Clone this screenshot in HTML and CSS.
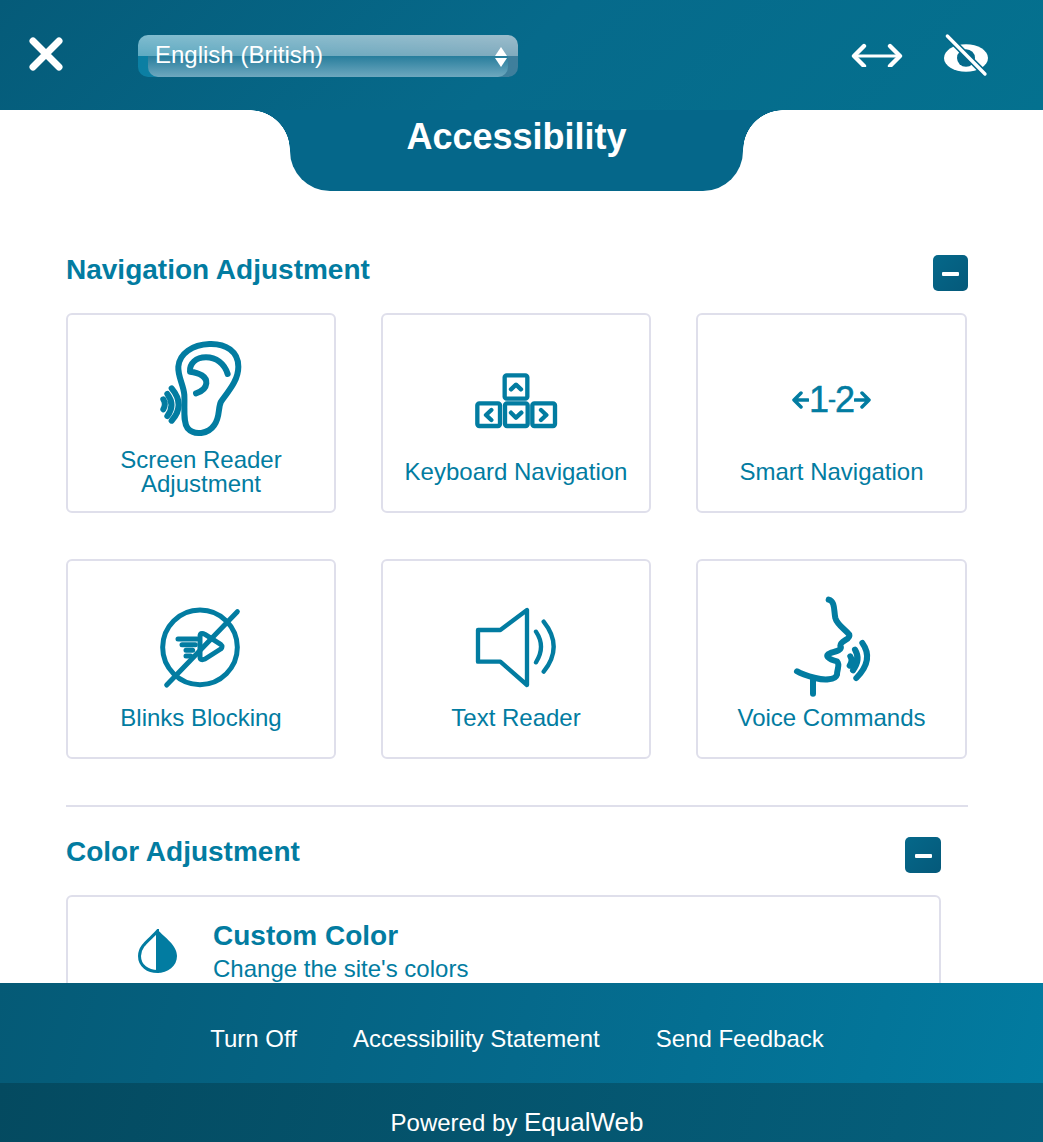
FILE: index.html
```html
<!DOCTYPE html>
<html lang="en">
<head>
    <meta charset="UTF-8">
    <meta name="viewport" content="width=device-width, initial-scale=1.0">
    <title>Accessibility</title>
    <link rel="stylesheet" href="styles.css">
</head>
<body>
    <div class="panel">
        <header class="top-bar">
            <button class="close-btn" type="button" aria-label="Close">
                <svg width="34" height="34" viewBox="0 0 34 34"><path d="M4 4 30 30M30 4 4 30" fill="none" stroke="#fff" stroke-width="7" stroke-linecap="round"/></svg>
            </button>
            <div class="lang-box">
                <span class="lang-glass"></span>
                <select class="lang-select" aria-label="Language">
                    <option>English (British)</option>
                </select>
                <span class="lang-arrows"></span>
            </div>
            <div class="top-icons">
                <svg width="54" height="24" viewBox="0 0 162 72" fill="none" stroke="#fff" stroke-linecap="round" stroke-linejoin="round">
                    <path d="M14 39H148" stroke-width="9"/>
                    <path d="M42 9 12 39 42 69M120 9 150 39 120 69" stroke-width="13"/>
                </svg>
                <svg width="46" height="46" viewBox="0 0 138 138">
                    <ellipse cx="69" cy="78" rx="66" ry="41" fill="#fff"/>
                    <ellipse cx="69" cy="78" rx="27" ry="26" fill="#056a8b"/>
                    <path d="M13 12 126 126" stroke="#056a8b" stroke-width="20"/>
                    <path d="M13 12 126 126" stroke="#fff" stroke-width="10" stroke-linecap="round"/>
                </svg>
            </div>
        </header>

        <main class="content">
            <div class="title-row">
                <h1 class="title-tab">Accessibility</h1>
            </div>

            <section class="section section-nav">
                <div class="section-head">
                    <h2>Navigation Adjustment</h2>
                    <button class="minus-btn" type="button" aria-label="Collapse"></button>
                </div>
                <div class="card-grid">
                    <div class="tile">
                        <div class="tile-icon">
                            <svg width="140" height="120" viewBox="0 -6 420 360" class="icon-line icon-bold">
                                <path d="M235 42C285 40 322 65 322 110 322 150 295 180 270 215 260 235 268 260 250 285 232 312 190 318 170 295 155 275 162 240 160 195 158 165 140 140 142 110 145 70 185 44 235 42Z"/>
                                <path d="M290 132C280 100 255 82 225 82 195 82 175 100 177 125 205 128 228 140 226 160 224 178 208 186 195 190"/>
                                <path d="M97 208Q106 222 97 238M109 192Q134 225 109 258M122 175Q164 225 122 272"/>
                            </svg>
                        </div>
                        <div class="tile-label">Screen Reader Adjustment</div>
                    </div>
                    <div class="tile">
                        <div class="tile-icon">
                            <svg width="110" height="80" viewBox="3 0 330 240" class="icon-line icon-keys">
                                <rect x="134" y="46" width="68" height="70" rx="6"/>
                                <rect x="52" y="130" width="68" height="68" rx="6"/>
                                <rect x="135" y="130" width="68" height="68" rx="6"/>
                                <rect x="217" y="130" width="68" height="68" rx="6"/>
                                <path d="M153 88 168 74 183 88M94 150 78 165 94 180M153 158 168 173 184 158M243 150 259 165 243 180"/>
                            </svg>
                        </div>
                        <div class="tile-label">Keyboard Navigation</div>
                    </div>
                    <div class="tile">
                        <div class="tile-icon">
                            <div class="smart-icon">
                                <svg width="17" height="20" viewBox="0 0 17 20" class="icon-line icon-arrow"><path d="M16 10H3M9 3 2 10 9 17"/></svg>
                                <span>1<span class="smart-dash">-</span>2</span>
                                <svg width="17" height="20" viewBox="0 0 17 20" class="icon-line icon-arrow"><path d="M1 10H14M8 3 15 10 8 17"/></svg>
                            </div>
                        </div>
                        <div class="tile-label">Smart Navigation</div>
                    </div>
                    <div class="tile">
                        <div class="tile-icon">
                            <svg width="100" height="100" viewBox="3 3 300 300" class="icon-line">
                                <circle cx="150" cy="157" r="112"/>
                                <path d="M50 270 262 50"/>
                                <path d="M150 125Q150 110 165 118L212 148Q220 155 212 162L165 192Q150 198 150 185Z"/>
                                <path d="M84 132H140M96 149H136M108 166H128M108 183H122"/>
                            </svg>
                        </div>
                        <div class="tile-label">Blinks Blocking</div>
                    </div>
                    <div class="tile">
                        <div class="tile-icon">
                            <svg width="100" height="90" viewBox="2 3 300 270" class="icon-line icon-thin">
                                <path d="M38 90H105L185 30V255L105 185H38Z"/>
                                <path d="M212 95Q242 140 212 187M235 65Q295 140 235 215"/>
                            </svg>
                        </div>
                        <div class="tile-label">Text Reader</div>
                    </div>
                    <div class="tile">
                        <div class="tile-icon">
                            <svg width="100" height="110" viewBox="5 4 300 330" class="icon-line icon-bold">
                                <path d="M145 30C165 35 160 62 165 85 170 105 195 120 207 135 212 150 180 152 180 168 186 180 172 184 150 190 130 196 145 210 170 215 180 225 170 238 170 255 165 272 130 272 105 265 85 260 65 255 50 245"/>
                                <path d="M98 270V312"/>
                                <path d="M210 200Q218 212 208 228M224 180Q242 210 218 242M246 160Q282 210 228 265"/>
                            </svg>
                        </div>
                        <div class="tile-label">Voice Commands</div>
                    </div>
                </div>
            </section>

            <section class="section section-color">
                <div class="section-head">
                    <h2>Color Adjustment</h2>
                    <button class="minus-btn" type="button" aria-label="Collapse"></button>
                </div>
                <div class="wide-card">
                    <svg width="40" height="44" viewBox="0 0 40 44" class="drop-icon">
                        <path d="M19.5 2C13 10 1.5 16 1.5 27 1.5 37 10 42.5 19.5 42.5Z" fill="none" stroke="#027ca1" stroke-width="3"/>
                        <path d="M19 0C27 9 39 16 39 27 39 37 30 44 19 44Z" fill="#027ca1"/>
                    </svg>
                    <div class="wide-text">
                        <div class="wide-title">Custom Color</div>
                        <div class="wide-sub">Change the site's colors</div>
                    </div>
                </div>
            </section>
        </main>

        <footer>
            <nav class="foot-links">
                <a>Turn Off</a>
                <a>Accessibility Statement</a>
                <a>Send Feedback</a>
            </nav>
            <div class="powered">Powered by <span class="brand">EqualWeb</span></div>
        </footer>
    </div>
</body>
</html>
```
FILE: styles.css
```css
/* Page */
html, body {
    margin: 0;
    padding: 0;
    height: 100%;
    background-color: white;
}

body {
    font-family: "Liberation Sans", Arial, sans-serif;
    color: #027ca1;
    overflow: hidden;
}

.panel {
    display: flex;
    flex-direction: column;
    height: 1142px;
}

/* Top bar */
.top-bar {
    display: flex;
    align-items: center;
    flex-shrink: 0;
    height: 110px;
    padding: 0 54px 0 29px;
    box-sizing: border-box;
    background: linear-gradient(135deg, #055b79 0%, #066a8b 50%, #04718f 100%);
}

.close-btn {
    display: flex;
    width: 34px;
    height: 34px;
    margin-top: -3px;
    padding: 0;
    background: none;
    border: none;
}

.lang-box {
    position: relative;
    width: 380px;
    height: 42px;
    margin: 2px 0 0 75px;
    border-radius: 10px;
    overflow: hidden;
    background:
        linear-gradient(to bottom, rgba(255, 255, 255, 0.48) 0, rgba(255, 255, 255, 0.34) 50%, transparent 50%),
        linear-gradient(to right, #0b7fa3, #3f7f9c);
}

.lang-glass {
    position: absolute;
    left: 10px;
    right: 10px;
    top: 21px;
    bottom: 0;
    border-radius: 0 0 10px 10px;
    background: linear-gradient(to bottom, #277d9c, #6ea8bf);
}

.lang-select {
    position: relative;
    width: 100%;
    height: 100%;
    padding: 0 0 4px 17px;
    font-family: inherit;
    font-size: 24px;
    color: white;
    background: transparent;
    border: none;
    appearance: none;
}

.lang-arrows {
    position: absolute;
    right: 11px;
    top: 12px;
    width: 0;
    height: 20px;
    border-left: 6px solid transparent;
    border-right: 6px solid transparent;
}

.lang-arrows::before,
.lang-arrows::after {
    content: "";
    position: absolute;
    left: -6px;
    border-left: 6px solid transparent;
    border-right: 6px solid transparent;
}

.lang-arrows::before {
    top: 0;
    border-bottom: 9px solid white;
}

.lang-arrows::after {
    bottom: 0;
    border-top: 9px solid white;
}

.top-icons {
    display: flex;
    align-items: center;
    gap: 39px;
    margin-left: auto;
}

/* Scrolling content */
.content {
    flex: 1;
    min-height: 0;
    overflow: hidden;
    padding-left: 66px;
}

.title-row {
    display: flex;
    justify-content: center;
    width: 901px;
}

.title-tab {
    position: relative;
    width: 453px;
    height: 81px;
    margin: 0;
    padding-bottom: 27px;
    box-sizing: border-box;
    display: flex;
    align-items: center;
    justify-content: center;
    font-size: 36px;
    font-weight: bold;
    color: white;
    border-radius: 0 0 40px 40px;
    background-color: #05678a;
}

.title-tab::before,
.title-tab::after {
    content: "";
    position: absolute;
    top: 0;
    width: 40px;
    height: 40px;
}

.title-tab::before {
    left: -40px;
    background: radial-gradient(circle at 0 100%, transparent 39.5px, #05678a 40px);
}

.title-tab::after {
    right: -40px;
    background: radial-gradient(circle at 100% 100%, transparent 39.5px, #05678a 40px);
}

/* Sections */
.section-nav {
    width: 902px;
    margin-top: 64px;
    padding-bottom: 46px;
    border-bottom: 2px solid #dfdfeb;
}

.section-nav .minus-btn {
    width: 35px;
}

.section-color {
    width: 875px;
    margin-top: 30px;
}

.section-head {
    display: flex;
    justify-content: space-between;
    align-items: flex-start;
    margin-bottom: 22px;
}

.section-head h2 {
    margin: 0;
    font-size: 28px;
    line-height: 30px;
    font-weight: bold;
}

.minus-btn {
    display: flex;
    align-items: center;
    justify-content: center;
    width: 36px;
    height: 36px;
    padding: 2px 0 0;
    border: none;
    border-radius: 5px;
    background: linear-gradient(135deg, #05688a, #05597a);
}

.minus-btn::after {
    content: "";
    width: 17px;
    height: 4px;
    border-radius: 1px;
    background-color: white;
}

/* Tiles */
.card-grid {
    display: grid;
    grid-template-columns: 270px 270px 271px;
    grid-auto-rows: 200px;
    column-gap: 45px;
    row-gap: 46px;
}

.tile {
    display: flex;
    flex-direction: column;
    justify-content: center;
    padding-bottom: 2px;
    box-sizing: border-box;
    border: 2px solid #dfdfeb;
    border-radius: 6px;
    background-color: white;
}

.tile-icon {
    display: flex;
    align-items: center;
    justify-content: center;
    height: 120px;
    flex-shrink: 0;
}

.tile-label {
    padding: 0 20px;
    font-size: 24px;
    line-height: 24px;
    text-align: center;
}

.icon-line {
    flex-shrink: 0;
    fill: none;
    stroke: #027ca1;
    stroke-width: 15;
    stroke-linecap: round;
    stroke-linejoin: round;
}

.icon-bold {
    stroke-width: 18;
}

.icon-keys {
    stroke-width: 13;
}

.icon-thin {
    stroke-width: 13;
}

.icon-arrow {
    stroke-width: 3.5;
}

.smart-icon {
    display: flex;
    align-items: center;
    font-size: 36px;
    line-height: 40px;
    letter-spacing: -1px;
    -webkit-text-stroke: 0.5px #027ca1;
}

.smart-dash {
    font-size: 24px;
    line-height: 1;
    vertical-align: 5px;
}

/* Color section card */
.wide-card {
    display: flex;
    align-items: flex-start;
    height: 150px;
    box-sizing: border-box;
    padding: 24px 0 0 70px;
    border: 2px solid #dfdfeb;
    border-radius: 6px;
}

.drop-icon {
    flex-shrink: 0;
    margin-top: 8px;
}

.wide-text {
    margin-left: 35px;
}

.wide-title {
    font-size: 28px;
    line-height: 30px;
    font-weight: bold;
}

.wide-sub {
    margin-top: 4px;
    font-size: 24px;
    line-height: 28px;
}

/* Footer */
footer {
    flex-shrink: 0;
    color: white;
}

.foot-links {
    display: flex;
    align-items: center;
    justify-content: center;
    gap: 56px;
    height: 100px;
    padding: 12px 9px 0 0;
    box-sizing: border-box;
    font-size: 24px;
    background: linear-gradient(105deg, #055a76 0%, #05698b 50%, #027ba0 100%);
}

.powered {
    height: 59px;
    padding: 24px 9px 0 0;
    box-sizing: border-box;
    font-size: 24px;
    line-height: 30px;
    text-align: center;
    background: linear-gradient(105deg, #044a60 0%, #05607d 100%);
}

.brand {
    font-size: 26px;
}
```
